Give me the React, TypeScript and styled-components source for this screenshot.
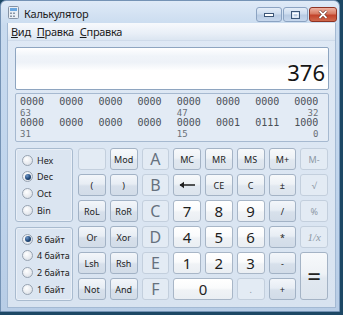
import React from "react";
import styled, { createGlobalStyle, css } from "styled-components";

type Kind = "op" | "paren" | "digit" | "off" | "letter";

interface IKey {
  label: React.ReactNode;
  kind: Kind;
  col?: string;
  row?: string;
  size?: number;
  serif?: boolean;
}

const GlobalStyle = createGlobalStyle`
  html, body {
    margin: 0;
    padding: 0;
    background: #1d4865;
  }
  body {
    width: 343px;
    height: 315px;
    overflow: hidden;
    font-family: "Noto Sans", "Open Sans", sans-serif;
  }
`;

const Window = styled.div`
  box-sizing: border-box;
  width: 340px;
  height: 312px;
  border: 1px solid #7593b5;
  border-radius: 6px 6px 0 0;
  background: linear-gradient(180deg, #dfeaf7 0%, #c9dbef 8%, #bfd4ec 60%, #b8cde6 100%);
  display: flex;
  flex-direction: column;
`;

const TitleBar = styled.div`
  height: 22px;
  display: flex;
  align-items: center;
  padding-left: 7px;
`;

const TitleText = styled.span`
  margin-left: 5px;
  font-size: 11px;
  letter-spacing: -0.25px;
  color: #1c1c1c;
  padding-top: 2px;
`;

const CaptionButtons = styled.div`
  margin-left: auto;
  margin-right: 2px;
  align-self: flex-start;
  margin-top: 6px;
  display: flex;
  gap: 1px;
`;

const CapButton = styled.div<{ $close?: boolean; $w: number }>`
  box-sizing: border-box;
  width: ${({ $w }) => $w}px;
  height: 15px;
  border-radius: 3px;
  border: 1px solid ${({ $close }) => ($close ? "#8e3323" : "#8ba3c2")};
  background: ${({ $close }) =>
    $close
      ? "linear-gradient(180deg, #eeb3a3 0%, #d77a62 45%, #c2432b 55%, #d0684c 100%)"
      : "linear-gradient(180deg, #e4edf8 0%, #cddcee 45%, #b8cbe3 55%, #c6d7ec 100%)"};
  display: flex;
  align-items: center;
  justify-content: center;
`;

const Client = styled.div`
  flex: 1;
  margin: 0 3px 3px 6px;
  border-left: 1px solid #a3b9d3;
  border-right: 1px solid #a3b9d3;
  border-bottom: 1px solid #a3b9d3;
  background: linear-gradient(180deg, #dfe9f5 0%, #d8e3f0 100%);
  display: flex;
  flex-direction: column;
  overflow: hidden;
`;

const MenuBar = styled.div`
  height: 17px;
  display: flex;
  align-items: center;
  gap: 6px;
  padding-left: 3px;
  background: linear-gradient(180deg, #f7f9fc 0%, #e9eff7 60%, #dbe5f1 100%);
  border-bottom: 1px solid #cfdbea;
`;

const MenuItem = styled.span`
  font-size: 11px;
  letter-spacing: -0.3px;
  color: #1a1a1a;
  u {
    text-decoration: underline;
    text-underline-offset: 1px;
  }
`;

const Content = styled.div`
  flex: 1;
  padding: 6px 6px 0 7px;
  display: flex;
  flex-direction: column;
`;

const Display = styled.div`
  box-sizing: border-box;
  height: 43px;
  border: 1px solid #8ea5c0;
  border-radius: 2px;
  background: linear-gradient(180deg, #ffffff 0%, #f0f4f9 20%, #eef2f8 35%, #ffffff 55%, #ffffff 100%);
  display: flex;
  align-items: flex-end;
  justify-content: flex-end;
  padding: 0 3px 4px 0;
  font-size: 22px;
  line-height: 26px;
  color: #151515;
`;

const BinaryPanel = styled.div`
  box-sizing: border-box;
  margin-top: 3px;
  height: 49px;
  border: 1px solid #a6b9d0;
  border-radius: 2px;
  background: #e3ebf5;
  padding: 3px 0 0 4px;
  display: grid;
  grid-template-columns: repeat(8, 24px);
  column-gap: 15.2px;
  grid-auto-rows: 10.6px;
  font-family: "DejaVu Sans Mono", "Liberation Mono", monospace;
  color: #4a4f57;
`;

const Bits = styled.span`
  font-size: 10px;
  line-height: 10.6px;
`;

const BitIndex = styled.span<{ $right?: boolean }>`
  font-size: 9px;
  line-height: 10.6px;
  color: #6a7078;
  text-align: ${({ $right }) => ($right ? "right" : "left")};
`;

const Main = styled.div`
  margin-top: 6px;
  display: flex;
  gap: 5px;
`;

const RadioColumn = styled.div`
  width: 58px;
  display: flex;
  flex-direction: column;
  gap: 5px;
`;

const RadioBox = styled.div`
  box-sizing: border-box;
  height: 74px;
  border: 1px solid #a9bbcf;
  border-radius: 3px;
  background: #dbe5f1;
  box-shadow: inset 0 0 0 1px #e9eff7;
  padding: 3px 0 0 6px;
  display: flex;
  flex-direction: column;
`;

const RadioRow = styled.label`
  height: 16.6px;
  display: flex;
  align-items: center;
  gap: 4px;
  font-size: 9px;
  color: #222;
`;

const RadioDot = styled.span<{ $on?: boolean }>`
  box-sizing: border-box;
  width: 11px;
  height: 11px;
  border-radius: 50%;
  border: 1px solid #97a3b1;
  background: radial-gradient(circle at 40% 35%, #ffffff 0%, #e6e9ee 60%, #cfd5dd 100%);
  display: flex;
  align-items: center;
  justify-content: center;
  ${({ $on }) =>
    $on &&
    css`
      &::after {
        content: "";
        width: 6px;
        height: 6px;
        border-radius: 50%;
        background: radial-gradient(circle at 35% 30%, #6f97c9 0%, #1f4777 55%, #0f2a4c 100%);
      }
    `}
`;

const Keypad = styled.div`
  width: 250px;
  height: 152px;
  display: grid;
  grid-template-columns: repeat(8, minmax(0, 1fr));
  grid-template-rows: repeat(6, minmax(0, 1fr));
  gap: 4px;
`;

const keyLook: Record<Kind, ReturnType<typeof css>> = {
  op: css`
    border-color: #a4b3c5;
    background: linear-gradient(180deg, #f7f9fb 0%, #eef2f6 45%, #e1e8f0 55%, #dce4ed 100%);
    color: #222;
  `,
  paren: css`
    border-color: #a2b2c5;
    background: linear-gradient(180deg, #f3f6fa 0%, #e7edf4 45%, #d7e0eb 55%, #d2dce8 100%);
    color: #222;
  `,
  digit: css`
    border-color: #a8b6c7;
    background: linear-gradient(180deg, #ffffff 0%, #fafbfc 45%, #f0f3f6 55%, #eaeef3 100%);
    color: #1e1e1e;
  `,
  off: css`
    border-color: #c3cfdd;
    background: #e3ebf4;
    color: #8d98a5;
  `,
  letter: css`
    border-color: #c3cfdd;
    background: #e3ebf4;
    color: #66717e;
  `,
};

const Key = styled.div<{ $kind: Kind; $col?: string; $row?: string; $size: number; $serif?: boolean }>`
  box-sizing: border-box;
  border: 1px solid;
  border-radius: 3px;
  display: flex;
  align-items: center;
  justify-content: center;
  line-height: 1;
  overflow: hidden;
  font-size: ${({ $size }) => $size}px;
  font-family: ${({ $serif }) => ($serif ? '"Liberation Serif", serif' : "inherit")};
  ${({ $serif }) => $serif && "font-style: italic;"}
  grid-column: ${({ $col }) => $col || "auto"};
  grid-row: ${({ $row }) => $row || "auto"};
  ${({ $kind }) => keyLook[$kind]}
`;

const BackArrow = () => (
  <svg width="17" height="8" viewBox="0 0 17 8">
    <path d="M1 4 H16" stroke="#1e1e1e" strokeWidth="1.6" />
    <path d="M0.5 4 L5 0.8 L5 7.2 Z" fill="#1e1e1e" />
  </svg>
);

const CalcIcon = () => (
  <svg width="11" height="13" viewBox="0 0 11 13">
    <rect x="0.5" y="0.5" width="10" height="12" rx="1" fill="#e9eef4" stroke="#8593a5" />
    <rect x="2" y="2" width="7" height="3" fill="#6aa7e0" />
    <rect x="2" y="6.5" width="2" height="1.5" fill="#8a96a6" />
    <rect x="5" y="6.5" width="2" height="1.5" fill="#8a96a6" />
    <rect x="2" y="9.5" width="2" height="1.5" fill="#8a96a6" />
    <rect x="5" y="9.5" width="2" height="1.5" fill="#8a96a6" />
  </svg>
);

const bitRows = [
  ["0000", "0000", "0000", "0000", "0000", "0000", "0000", "0000"],
  ["0000", "0000", "0000", "0000", "0000", "0001", "0111", "1000"],
];
const bitIndex = [
  ["63", "47", "32"],
  ["31", "15", "0"],
];

const keys: IKey[] = [
  { label: "", kind: "off" },
  { label: "Mod", kind: "op" },
  { label: "A", kind: "letter", size: 16 },
  { label: "MC", kind: "op" },
  { label: "MR", kind: "op" },
  { label: "MS", kind: "op" },
  { label: "M+", kind: "op" },
  { label: "M-", kind: "off" },

  { label: "(", kind: "paren" },
  { label: ")", kind: "paren" },
  { label: "B", kind: "letter", size: 16 },
  { label: <BackArrow />, kind: "op" },
  { label: "CE", kind: "op" },
  { label: "C", kind: "op" },
  { label: "±", kind: "op" },
  { label: "√", kind: "off" },

  { label: "RoL", kind: "paren" },
  { label: "RoR", kind: "paren" },
  { label: "C", kind: "letter", size: 16 },
  { label: "7", kind: "digit", size: 15 },
  { label: "8", kind: "digit", size: 15 },
  { label: "9", kind: "digit", size: 15 },
  { label: "/", kind: "paren" },
  { label: "%", kind: "off" },

  { label: "Or", kind: "paren" },
  { label: "Xor", kind: "paren" },
  { label: "D", kind: "letter", size: 16 },
  { label: "4", kind: "digit", size: 15 },
  { label: "5", kind: "digit", size: 15 },
  { label: "6", kind: "digit", size: 15 },
  { label: "*", kind: "paren" },
  { label: "1/x", kind: "off", size: 11, serif: true },

  { label: "Lsh", kind: "paren" },
  { label: "Rsh", kind: "paren" },
  { label: "E", kind: "letter", size: 16 },
  { label: "1", kind: "digit", size: 15 },
  { label: "2", kind: "digit", size: 15 },
  { label: "3", kind: "digit", size: 15 },
  { label: "-", kind: "paren" },
  { label: "=", kind: "op", size: 24, row: "5 / span 2", col: "8" },

  { label: "Not", kind: "paren" },
  { label: "And", kind: "paren" },
  { label: "F", kind: "letter", size: 16 },
  { label: "0", kind: "digit", size: 15, col: "4 / span 2" },
  { label: ".", kind: "off" },
  { label: "+", kind: "paren" },
];

const radixes = ["Hex", "Dec", "Oct", "Bin"];
const sizes = ["8 байт", "4 байта", "2 байта", "1 байт"];

export default function App() {
  return (
    <>
      <GlobalStyle />
      <Window>
        <TitleBar>
          <CalcIcon />
          <TitleText>Калькулятор</TitleText>
          <CaptionButtons>
            <CapButton $w={26}>
              <svg width="10" height="4" viewBox="0 0 10 4">
                <rect x="0.5" y="0.5" width="9" height="3" fill="#fff" stroke="#3c5677" />
              </svg>
            </CapButton>
            <CapButton $w={25}>
              <svg width="9" height="8" viewBox="0 0 9 8">
                <rect x="0.5" y="0.5" width="8" height="7" fill="none" stroke="#3c5677" />
                <rect x="2" y="2.5" width="5" height="3.5" fill="none" stroke="#fff" />
              </svg>
            </CapButton>
            <CapButton $w={28} $close>
              <svg width="10" height="9" viewBox="0 0 10 9">
                <path d="M1.5 1 L8.5 8 M8.5 1 L1.5 8" stroke="#5a1c12" strokeWidth="3" />
                <path d="M1.5 1 L8.5 8 M8.5 1 L1.5 8" stroke="#fff" strokeWidth="1.8" />
              </svg>
            </CapButton>
          </CaptionButtons>
        </TitleBar>
        <Client>
          <MenuBar>
            <MenuItem><u>В</u>ид</MenuItem>
            <MenuItem><u>П</u>равка</MenuItem>
            <MenuItem><u>С</u>правка</MenuItem>
          </MenuBar>
          <Content>
            <Display>376</Display>
            <BinaryPanel>
              {bitRows.map((row, r) => (
                <React.Fragment key={r}>
                  {row.map((b, i) => (
                    <Bits key={"b" + i}>{b}</Bits>
                  ))}
                  <BitIndex>{bitIndex[r][0]}</BitIndex>
                  <span />
                  <span />
                  <span />
                  <BitIndex>{bitIndex[r][1]}</BitIndex>
                  <span />
                  <span />
                  <BitIndex $right>{bitIndex[r][2]}</BitIndex>
                </React.Fragment>
              ))}
            </BinaryPanel>
            <Main>
              <RadioColumn>
                <RadioBox>
                  {radixes.map((r) => (
                    <RadioRow key={r}>
                      <RadioDot $on={r === "Dec"} />
                      {r}
                    </RadioRow>
                  ))}
                </RadioBox>
                <RadioBox>
                  {sizes.map((s) => (
                    <RadioRow key={s}>
                      <RadioDot $on={s === "8 байт"} />
                      {s}
                    </RadioRow>
                  ))}
                </RadioBox>
              </RadioColumn>
              <Keypad>
                {keys.map((k, i) => (
                  <Key
                    key={i}
                    $kind={k.kind}
                    $col={k.col}
                    $row={k.row}
                    $size={k.size || 9}
                    $serif={k.serif}
                  >
                    {k.label}
                  </Key>
                ))}
              </Keypad>
            </Main>
          </Content>
        </Client>
      </Window>
    </>
  );
}
